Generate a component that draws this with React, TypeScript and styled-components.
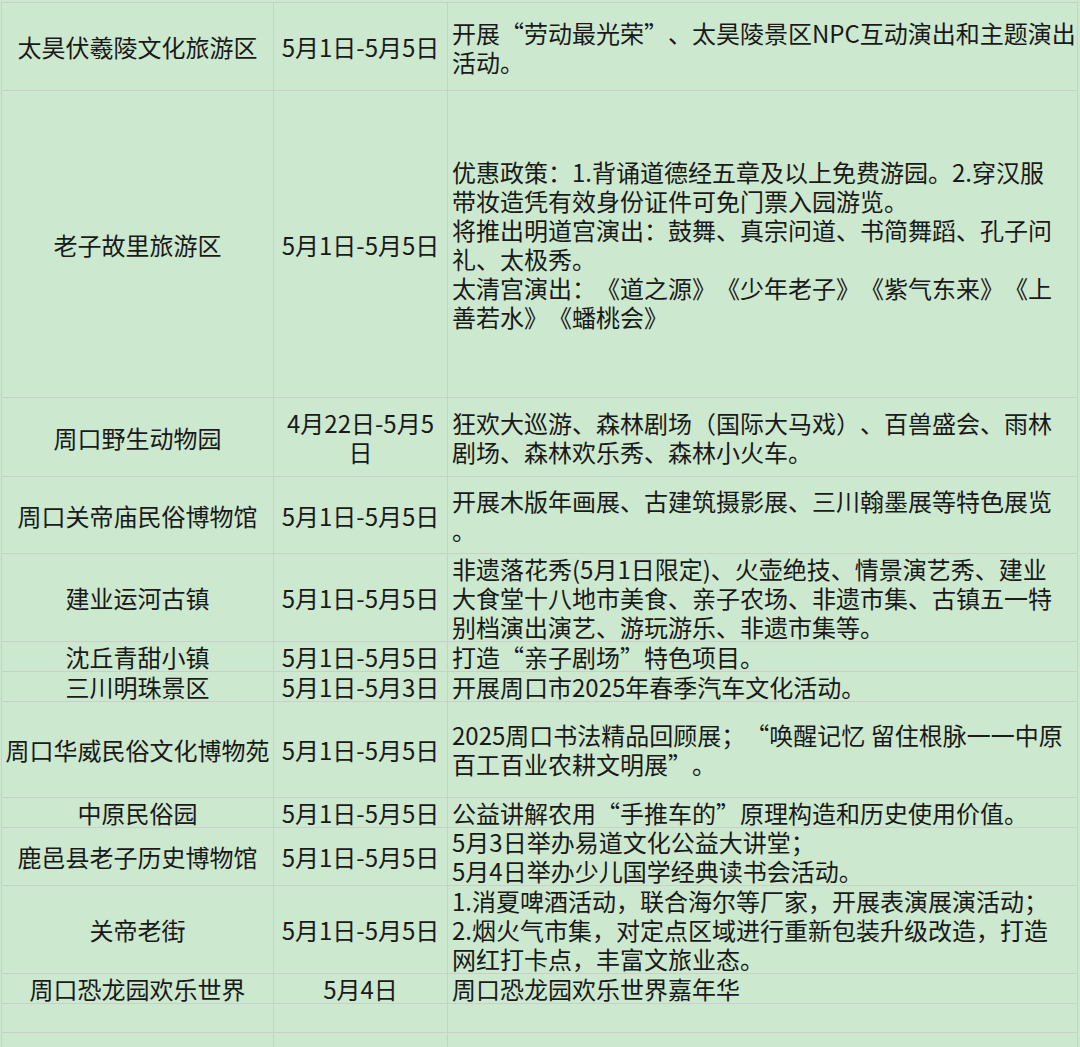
import styled, { createGlobalStyle } from "styled-components";

const GlobalStyle = createGlobalStyle`
    html, body {
        margin: 0;
        padding: 0;
        height: 100%;
        overflow: hidden;
        background: #cce8cf;
    }
`;

const Wrapper = styled.div`
    width: 100%;
    height: 100vh;
    padding: 2px 0 0 1px;
    box-sizing: border-box;
    background: #cce8cf;
    font-family: "Noto Sans CJK SC", "Noto Sans", sans-serif;
    font-size: 24px;
    line-height: 29px;
    color: #1a1a1a;
    text-spacing-trim: space-all;
`;

const Sheet = styled.div`
    display: flex;
    flex-direction: column;
    width: 1077px;
    border-top: 1px solid #c9cfc9;
    border-left: 1px solid #c9cfc9;
`;

const Row = styled.div<{ $h: number }>`
    display: grid;
    grid-template-columns: 272px 174px 630px;
    height: ${(p) => p.$h}px;
    flex-shrink: 0;
`;

const Cell = styled.div<{ $align?: "left" | "center" }>`
    box-sizing: border-box;
    display: flex;
    flex-direction: column;
    justify-content: center;
    align-items: ${(p) => (p.$align === "left" ? "flex-start" : "center")};
    padding-left: ${(p) => (p.$align === "left" ? "4px" : "0")};
    border-right: 1px solid #c9cfc9;
    border-bottom: 1px solid #c9cfc9;
`;

const Line = styled.span`
    display: block;
    white-space: nowrap;
`;

type Item = {
    name: string;
    date: string[];
    desc: string[];
    h: number;
};

const d55 = ["5月1日-5月5日"];

const rows: Item[] = [
    {
        name: "太昊伏羲陵文化旅游区",
        date: d55,
        desc: ["开展“劳动最光荣”、太昊陵景区NPC互动演出和主题演出", "活动。"],
        h: 88,
    },
    {
        name: "老子故里旅游区",
        date: d55,
        desc: [
            "优惠政策：1.背诵道德经五章及以上免费游园。2.穿汉服",
            "带妆造凭有效身份证件可免门票入园游览。",
            "将推出明道宫演出：鼓舞、真宗问道、书简舞蹈、孔子问",
            "礼、太极秀。",
            "太清宫演出：《道之源》《少年老子》《紫气东来》《上",
            "善若水》《蟠桃会》",
        ],
        h: 307,
    },
    {
        name: "周口野生动物园",
        date: ["4月22日-5月5", "日"],
        desc: ["狂欢大巡游、森林剧场（国际大马戏）、百兽盛会、雨林", "剧场、森林欢乐秀、森林小火车。"],
        h: 79,
    },
    {
        name: "周口关帝庙民俗博物馆",
        date: d55,
        desc: ["开展木版年画展、古建筑摄影展、三川翰墨展等特色展览", "。"],
        h: 77,
    },
    {
        name: "建业运河古镇",
        date: d55,
        desc: [
            "非遗落花秀(5月1日限定)、火壶绝技、情景演艺秀、建业",
            "大食堂十八地市美食、亲子农场、非遗市集、古镇五一特",
            "别档演出演艺、游玩游乐、非遗市集等。",
        ],
        h: 88,
    },
    {
        name: "沈丘青甜小镇",
        date: d55,
        desc: ["打造“亲子剧场”特色项目。"],
        h: 30,
    },
    {
        name: "三川明珠景区",
        date: ["5月1日-5月3日"],
        desc: ["开展周口市2025年春季汽车文化活动。"],
        h: 29,
    },
    {
        name: "周口华威民俗文化博物苑",
        date: d55,
        desc: ["2025周口书法精品回顾展；“唤醒记忆 留住根脉一一中原", "百工百业农耕文明展”。"],
        h: 97,
    },
    {
        name: "中原民俗园",
        date: d55,
        desc: ["公益讲解农用“手推车的”原理构造和历史使用价值。"],
        h: 29,
    },
    {
        name: "鹿邑县老子历史博物馆",
        date: d55,
        desc: ["5月3日举办易道文化公益大讲堂；", "5月4日举办少儿国学经典读书会活动。"],
        h: 59,
    },
    {
        name: "关帝老街",
        date: d55,
        desc: [
            "1.消夏啤酒活动，联合海尔等厂家，开展表演展演活动；",
            "2.烟火气市集，对定点区域进行重新包装升级改造，打造",
            "网红打卡点，丰富文旅业态。",
        ],
        h: 88,
    },
    {
        name: "周口恐龙园欢乐世界",
        date: ["5月4日"],
        desc: ["周口恐龙园欢乐世界嘉年华"],
        h: 29,
    },
    { name: "", date: [], desc: [], h: 30 },
    { name: "", date: [], desc: [], h: 30 },
];

const App = () => {
    return (
        <Wrapper lang="zh-CN">
            <GlobalStyle />
            <Sheet>
                {rows.map((r, i) => (
                    <Row key={i} $h={r.h}>
                        <Cell>
                            <Line>{r.name}</Line>
                        </Cell>
                        <Cell>
                            {r.date.map((t, j) => (
                                <Line key={j}>{t}</Line>
                            ))}
                        </Cell>
                        <Cell $align="left">
                            {r.desc.map((t, j) => (
                                <Line key={j}>{t}</Line>
                            ))}
                        </Cell>
                    </Row>
                ))}
            </Sheet>
        </Wrapper>
    );
};

export default App;
